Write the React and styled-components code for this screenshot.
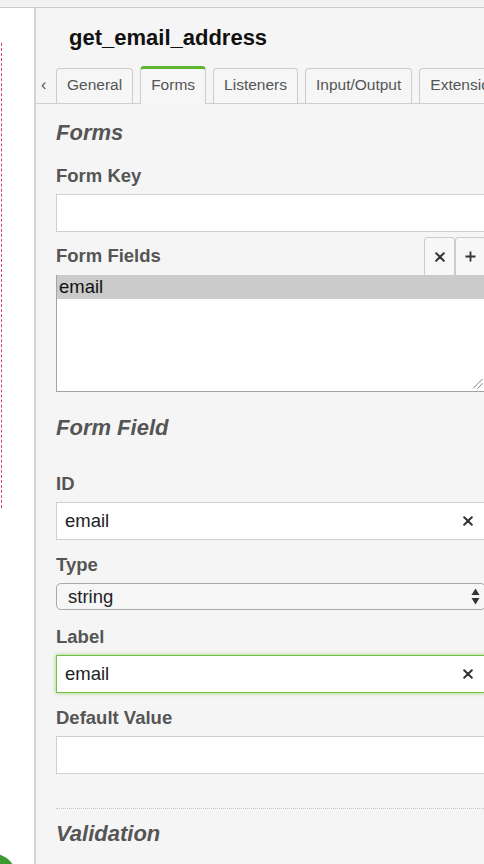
import React from "react";
import styled, { createGlobalStyle } from "styled-components";

const GlobalStyle = createGlobalStyle`
  html, body {
    margin: 0;
    padding: 0;
    width: 484px;
    height: 864px;
    overflow: hidden;
    background: #ffffff;
  }
  body {
    font-family: "Liberation Sans", Arial, Helvetica, sans-serif;
  }
  * { box-sizing: border-box; }
`;

const Page = styled.div`
  display: flex;
  flex-direction: column;
  width: 484px;
  height: 864px;
  overflow: hidden;
`;

const TopBar = styled.div`
  flex-shrink: 0;
  height: 8px;
  background: #f2f2f2;
  border-bottom: 1px solid #cbcbcb;
`;

const Main = styled.div`
  display: flex;
  flex: 1;
  min-height: 0;
`;

const Canvas = styled.div`
  position: relative;
  flex-shrink: 0;
  width: 34px;
  background: #ffffff;
  overflow: hidden;
`;

const DashedShape = styled.div`
  position: absolute;
  left: -19px;
  top: 35px;
  width: 21px;
  height: 465px;
  border-right: 1px dashed #d9475e;
`;

const EventCircle = styled.div`
  position: absolute;
  left: -28px;
  bottom: -34px;
  width: 44px;
  height: 44px;
  border-radius: 50%;
  background: #3d9a30;
`;

const Panel = styled.div`
  flex-shrink: 0;
  width: 452px;
  display: flex;
  flex-direction: column;
  padding: 17px 0 0 20px;
  background: #f5f5f5;
  border-left: 2px solid #d3d3d3;
`;

const Title = styled.h1`
  margin: 0;
  padding-left: 13px;
  font-size: 22px;
  line-height: 26px;
  font-weight: bold;
  color: #111;
`;

const TabRow = styled.div`
  display: flex;
  align-items: flex-end;
  height: 38px;
  margin: 15px 0 0 -20px;
  border-bottom: 1px solid #cfcfcf;
`;

const Chevron = styled.span`
  flex-shrink: 0;
  align-self: center;
  width: 20px;
  padding-left: 5px;
  font-size: 16px;
  line-height: 16px;
  color: #555;
`;

const Tab = styled.div`
  position: relative;
  flex-shrink: 0;
  display: flex;
  align-items: center;
  height: ${(p) => (p.$active ? "37px" : "35px")};
  padding: 0 10px 2px;
  margin-right: 7px;
  font-size: 15.5px;
  color: #555;
  white-space: nowrap;
  background: #f6f6f6;
  border: 1px solid #cccccc;
  border-top: ${(p) => (p.$active ? "3px solid #5cb531" : "1px solid #cccccc")};
  border-bottom: 0;
  border-radius: 4px 4px 0 0;

  &::after {
    content: "";
    display: ${(p) => (p.$active ? "block" : "none")};
    position: absolute;
    left: 0;
    right: 0;
    bottom: -1px;
    height: 1px;
    background: #f5f5f5;
  }
`;

const Content = styled.div`
  display: flex;
  flex-direction: column;
  width: 430px;
`;

const SectionHeading = styled.h2`
  margin: ${(p) => p.$top}px 0 0;
  font-size: 22px;
  line-height: 26px;
  font-weight: bold;
  font-style: italic;
  color: #555;
`;

const FieldGroup = styled.div`
  display: flex;
  flex-direction: column;
  margin-top: ${(p) => p.$top}px;
`;

const Label = styled.div`
  margin-bottom: ${(p) => (p.$inline ? 0 : 7)}px;
  font-size: 18.5px;
  line-height: 22px;
  font-weight: bold;
  color: #555;
`;

const TextInput = styled.div`
  display: flex;
  align-items: center;
  justify-content: space-between;
  height: 38px;
  padding: 0 12px 0 8px;
  font-size: 18.5px;
  color: #222;
  background: #ffffff;
  border: 1px solid ${(p) => (p.$focused ? "#74c045" : "#cfcfcf")};
  box-shadow: ${(p) => (p.$focused ? "0 0 4px rgba(110, 190, 60, 0.7)" : "none")};
`;

const ClearIcon = () => (
  <svg width="10" height="10" viewBox="0 0 10 10">
    <path d="M1.2 1.2L8.8 8.8M8.8 1.2L1.2 8.8" stroke="#333" strokeWidth="2" strokeLinecap="round" />
  </svg>
);

const PlusIcon = () => (
  <svg width="11" height="11" viewBox="0 0 11 11">
    <path d="M5.5 0.5V10.5M0.5 5.5H10.5" stroke="#333" strokeWidth="1.8" />
  </svg>
);

const HeaderRow = styled.div`
  display: flex;
  align-items: center;
  justify-content: space-between;
  height: 38px;
  margin-top: 5px;
`;

const ButtonGroup = styled.div`
  display: flex;
`;

const IconButton = styled.div`
  display: flex;
  align-items: center;
  justify-content: center;
  width: 31px;
  height: 38px;
  background: #f7f7f7;
  border: 1px solid #cccccc;
  border-bottom: 0;
  border-radius: 4px 4px 0 0;
`;

const ListBox = styled.div`
  position: relative;
  height: 117px;
  background: #ffffff;
  border: 1px solid #a3a3a3;
  border-top: 0;
`;

const ListOption = styled.div`
  height: 24px;
  padding-left: 2px;
  font-size: 18.5px;
  line-height: 24px;
  color: #111;
  background: ${(p) => (p.$selected ? "#cbcbcb" : "transparent")};
`;

const ResizeGrip = styled.svg`
  position: absolute;
  right: 2px;
  bottom: 2px;
`;

const Select = styled.div`
  display: flex;
  align-items: center;
  justify-content: space-between;
  height: 27px;
  padding: 0 5px 0 11px;
  font-size: 18.5px;
  color: #222;
  background: #f6f6f6;
  border: 1px solid #a9a9a9;
  border-radius: 5px;
`;

const SelectArrows = () => (
  <svg width="9" height="17" viewBox="0 0 9 17">
    <path d="M4.5 0.5L8.5 7H0.5Z" fill="#333" />
    <path d="M4.5 16.5L8.5 10H0.5Z" fill="#333" />
  </svg>
);

const Divider = styled.div`
  margin-top: 34px;
  border-top: 1px dotted #c4c4c4;
`;

export default function App() {
  return (
    <Page>
      <GlobalStyle />
      <TopBar />
      <Main>
        <Canvas>
          <DashedShape />
          <EventCircle />
        </Canvas>
        <Panel>
          <Title>get_email_address</Title>
          <TabRow>
            <Chevron>‹</Chevron>
            <Tab>General</Tab>
            <Tab $active>Forms</Tab>
            <Tab>Listeners</Tab>
            <Tab>Input/Output</Tab>
            <Tab>Extensions</Tab>
          </TabRow>
          <Content>
            <SectionHeading $top={16}>Forms</SectionHeading>
            <FieldGroup $top={19}>
              <Label>Form Key</Label>
              <TextInput />
            </FieldGroup>
            <HeaderRow>
              <Label $inline>Form Fields</Label>
              <ButtonGroup>
                <IconButton><ClearIcon /></IconButton>
                <IconButton><PlusIcon /></IconButton>
              </ButtonGroup>
            </HeaderRow>
            <ListBox>
              <ListOption $selected>email</ListOption>
              <ResizeGrip width="11" height="11" viewBox="0 0 11 11">
                <path d="M10.5 1L1 10.5M10.5 5.5L5.5 10.5" stroke="#808080" strokeWidth="1" />
              </ResizeGrip>
            </ListBox>
            <SectionHeading $top={23}>Form Field</SectionHeading>
            <FieldGroup $top={32}>
              <Label>ID</Label>
              <TextInput>
                <span>email</span>
                <ClearIcon />
              </TextInput>
            </FieldGroup>
            <FieldGroup $top={14}>
              <Label>Type</Label>
              <Select>
                <span>string</span>
                <SelectArrows />
              </Select>
            </FieldGroup>
            <FieldGroup $top={16}>
              <Label>Label</Label>
              <TextInput $focused>
                <span>email</span>
                <ClearIcon />
              </TextInput>
            </FieldGroup>
            <FieldGroup $top={14}>
              <Label>Default Value</Label>
              <TextInput />
            </FieldGroup>
            <Divider />
            <SectionHeading $top={12}>Validation</SectionHeading>
          </Content>
        </Panel>
      </Main>
    </Page>
  );
}
